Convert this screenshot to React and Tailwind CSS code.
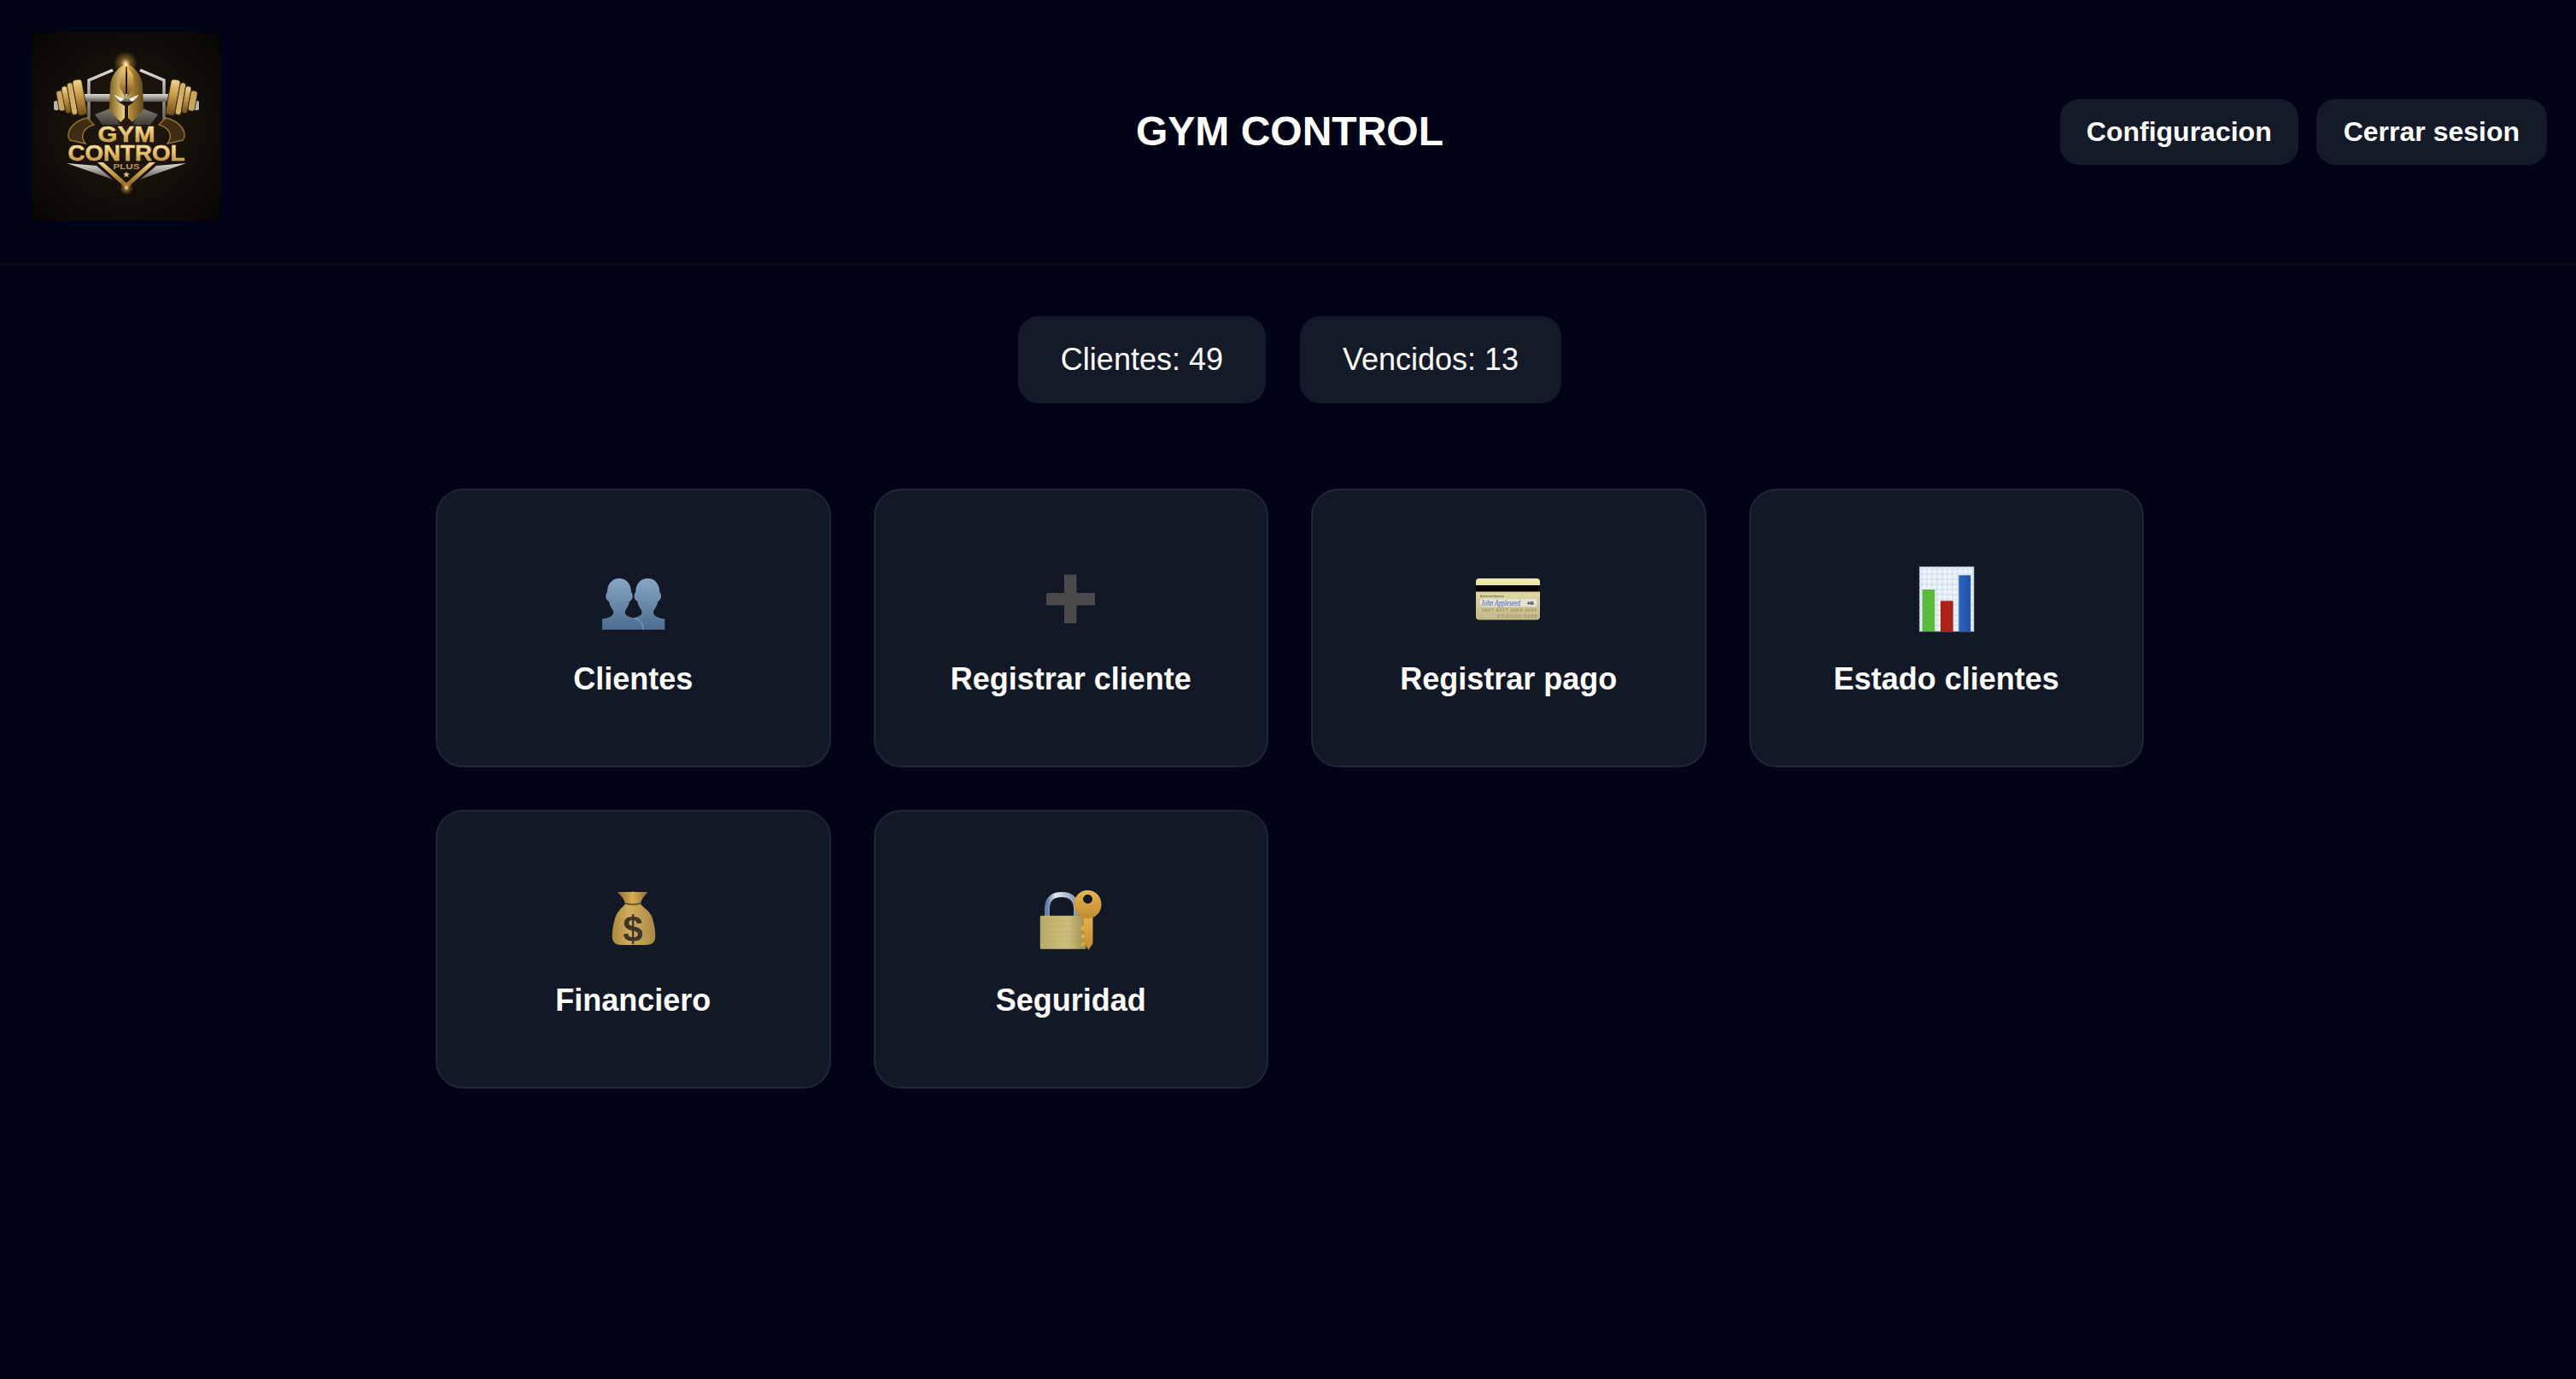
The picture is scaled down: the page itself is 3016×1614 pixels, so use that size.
import React from "react";

function Logo() {
  return (
    <svg width="220" height="220" viewBox="0 0 220 220" className="block">
      <defs>
        <radialGradient id="lbg" cx="50%" cy="50%" r="72%">
          <stop offset="0%" stopColor="#261c10" />
          <stop offset="50%" stopColor="#140f09" />
          <stop offset="100%" stopColor="#060504" />
        </radialGradient>
        <linearGradient id="lg" x1="0" y1="0" x2="0" y2="1">
          <stop offset="0%" stopColor="#f0d48c" />
          <stop offset="50%" stopColor="#bf9040" />
          <stop offset="100%" stopColor="#6f4e1a" />
        </linearGradient>
        <linearGradient id="lh" x1="0" y1="0" x2="1" y2="0">
          <stop offset="0%" stopColor="#7d5f24" />
          <stop offset="42%" stopColor="#e8ca7c" />
          <stop offset="50%" stopColor="#fbeab0" />
          <stop offset="58%" stopColor="#b98e3f" />
          <stop offset="100%" stopColor="#5f4718" />
        </linearGradient>
        <linearGradient id="ls" x1="0" y1="0" x2="0" y2="1">
          <stop offset="0%" stopColor="#dedbd3" />
          <stop offset="100%" stopColor="#5d5a55" />
        </linearGradient>
        <linearGradient id="lt" x1="0" y1="0" x2="0" y2="1">
          <stop offset="0%" stopColor="#fff0bd" />
          <stop offset="55%" stopColor="#e4bb6a" />
          <stop offset="100%" stopColor="#a97a2e" />
        </linearGradient>
        <radialGradient id="lglow">
          <stop offset="0%" stopColor="#fff2c0" stopOpacity="1" />
          <stop offset="40%" stopColor="#e2ab46" stopOpacity=".45" />
          <stop offset="100%" stopColor="#e2ab46" stopOpacity="0" />
        </radialGradient>
      </defs>
      <rect width="220" height="220" fill="url(#lbg)" />
      {/* shield */}
      <path d="M70 58L92 49V108H70ZM150 58L128 49V108H150Z" fill="#1a140c" />
      <path d="M66 108V56L94 44M154 108V56L126 44" stroke="url(#ls)" strokeWidth="3.5" fill="none" />
      {/* bar */}
      <rect x="55" y="72" width="110" height="9" rx="3" fill="url(#ls)" />
      <rect x="25" y="80" width="6" height="11" rx="2" fill="#b5b3ae" />
      <rect x="189" y="80" width="6" height="11" rx="2" fill="#b5b3ae" />
      <g transform="rotate(-10 44 77)" stroke="#2d200b" strokeWidth=".8">
        <rect x="29" y="66" width="8" height="24" rx="3" fill="#c9a55b" />
        <rect x="36" y="62" width="7" height="32" rx="3" fill="url(#lg)" />
        <rect x="43" y="59" width="7" height="38" rx="3" fill="#d4b064" />
        <rect x="50" y="57" width="11" height="42" rx="4" fill="url(#lg)" />
      </g>
      <g transform="rotate(10 176 77)" stroke="#2d200b" strokeWidth=".8">
        <rect x="159" y="57" width="11" height="42" rx="4" fill="url(#lg)" />
        <rect x="170" y="59" width="7" height="38" rx="3" fill="#d4b064" />
        <rect x="177" y="62" width="7" height="32" rx="3" fill="url(#lg)" />
        <rect x="184" y="66" width="8" height="24" rx="3" fill="#c9a55b" />
      </g>
      {/* gold swooshes */}
      <path d="M64 100C46 104 38 118 44 126L62 130C56 122 58 112 72 108Z" fill="#3e2d12" stroke="#94702e" strokeWidth="1.5" />
      <path d="M156 100C174 104 182 118 176 126L158 130C164 122 162 112 148 108Z" fill="#3e2d12" stroke="#94702e" strokeWidth="1.5" />
      {/* shoulders */}
      <path d="M73 96L96 87L102 108H82ZM147 96L124 87L118 108H138Z" fill="url(#ls)" opacity=".55" />
      {/* helmet */}
      <path d="M110 36C100 41 92 50 91 62L90 90L103 105L108 100V86L99 80L96 73L107 78L109 40H111L113 78L124 73L121 80L112 86V100L117 105L130 90L129 62C128 50 120 41 110 36Z" fill="url(#lh)" />
      <path d="M96 73L107 78L103 81ZM124 73L113 78L117 81Z" fill="#fff7dd" />
      <path d="M102 50L109 40V76L102 64ZM118 50L111 40V76L118 64Z" fill="url(#lg)" />
      <circle cx="109" cy="36" r="14" fill="url(#lglow)" />
      {/* blades & point */}
      <path d="M40 153L94 172L75 156ZM180 153L126 172L145 156Z" fill="url(#ls)" />
      <path d="M76 152L110 183L144 152L137 152L110 176L83 152Z" fill="url(#lg)" />
      <circle cx="110" cy="182" r="8" fill="url(#lglow)" />
      {/* wordmark */}
      <text x="110" y="128" textAnchor="middle" fontSize="25" fontWeight="700" fill="url(#lt)" stroke="#e4bb6a" strokeWidth=".5" textLength="67" lengthAdjust="spacingAndGlyphs">GYM</text>
      <text x="110" y="150" textAnchor="middle" fontSize="25" fontWeight="700" fill="url(#lt)" stroke="#e4bb6a" strokeWidth=".5" textLength="137" lengthAdjust="spacingAndGlyphs">CONTROL</text>
      <text x="110" y="160" textAnchor="middle" fontSize="9.5" fontWeight="700" fill="#b99554" textLength="31" lengthAdjust="spacingAndGlyphs">PLUS</text>
      <path d="M110 162.5l1 2.6 2.8.1-2.2 1.7.8 2.7-2.4-1.6-2.4 1.6.8-2.7-2.2-1.7 2.8-.1z" fill="#e9c273" />
    </svg>
  );
}

function IconPeople() {
  const bust = "M4 77V64.5C10 63.5 16 62 17 58C17.5 56 17 55 16.5 54C14 51 12.5 47 12 44C9.5 43 8 40 8.3 37C8.5 35 9.5 33.5 10 33C10 24 15 17 24 17C33 17 38 24 38 33C38.5 33.5 39.5 35 39.7 37C40 40 38.5 43 36 44C35.5 47 34 51 31.5 54C31 55 30.5 56 31 58C32 61 37 62.5 42 63.5C48 65 52 69 52 77Z";
  return (
    <svg width="80" height="80" viewBox="0 0 80 80" className="block">
      <defs>
        <linearGradient id="pg" gradientUnits="userSpaceOnUse" x1="0" y1="17" x2="0" y2="77">
          <stop offset="0%" stopColor="#88a6c6" />
          <stop offset="100%" stopColor="#4d6c8f" />
        </linearGradient>
      </defs>
      <g transform="translate(81.3,0) scale(-1,1)"><path d={bust} fill="url(#pg)" /></g>
      <path d={bust} fill="url(#pg)" />
      <path d="M42 63.5C48 65 52 69 52 77" fill="none" stroke="#9db8d3" strokeWidth=".8" />
    </svg>
  );
}

function IconPlus() {
  return (
    <svg width="80" height="80" viewBox="0 0 80 80" className="block">
      <path d="M32.5 13H46V34.5H67.5V48H46V69H32.5V48H11.5V34.5H32.5Z" fill="#4a4a4b" stroke="#555556" strokeWidth=".7" />
    </svg>
  );
}

function IconCard() {
  return (
    <svg width="80" height="80" viewBox="-1 0 80 80" className="block">
      <defs>
        <linearGradient id="cg" x1="0" y1="0" x2="0" y2="1">
          <stop offset="0%" stopColor="#f0e9b0" />
          <stop offset="100%" stopColor="#c2b786" />
        </linearGradient>
      </defs>
      <rect x="1" y="17" width="75" height="48.5" rx="4" fill="url(#cg)" />
      <rect x="1" y="25" width="75" height="7.5" fill="#050505" />
      <text x="6" y="38.6" fontSize="3" fill="#444">Authorized Signature</text>
      <rect x="6" y="41" width="66" height="9" fill="#e4e3da" />
      <text x="7" y="49" fontSize="10" fontStyle="italic" fontFamily="'Liberation Serif', serif" fill="#3f63ad" textLength="46" lengthAdjust="spacingAndGlyphs">John Appleseed</text>
      <text x="61" y="47.6" fontSize="4.6" fontWeight="700" fill="#222">448</text>
      <text x="8" y="55.6" fontSize="5" fontWeight="700" fill="#98926a" textLength="64" lengthAdjust="spacing">6897 6877 9000 3045</text>
      <text x="26" y="63" fontSize="5" fontWeight="700" fill="#98926a" textLength="46" lengthAdjust="spacing">07/22/14 3000</text>
    </svg>
  );
}

function IconChart() {
  const lines = [];
  for (let i = 0; i < 13; i++) lines.push(<path key={"h" + i} d={`M8.5 ${6 + i * 6}H72`} stroke="#d3e2f0" strokeWidth="1.5" />);
  for (let i = 0; i < 11; i++) lines.push(<path key={"v" + i} d={`M${11 + i * 6} 3.5V79`} stroke="#d3e2f0" strokeWidth="1.5" />);
  return (
    <svg width="80" height="80" viewBox="0 0 80 80" className="block">
      <defs>
        <linearGradient id="cbg" x1="0" y1="0" x2="1" y2="0">
          <stop offset="0%" stopColor="#2f64c4" />
          <stop offset="100%" stopColor="#1f4fa8" />
        </linearGradient>
      </defs>
      <rect x="8.3" y="3.3" width="63.7" height="75.7" fill="#f0f3f7" stroke="#8f97a5" strokeWidth=".8" />
      {lines}
      <rect x="11.7" y="30" width="14.6" height="49" fill="#5aba3c" />
      <rect x="33" y="43.3" width="14.7" height="35.7" fill="#ab2415" />
      <rect x="54.3" y="13.3" width="14" height="65.7" fill="url(#cbg)" />
    </svg>
  );
}

function IconBag() {
  return (
    <svg width="80" height="80" viewBox="0 0 80 80" className="block">
      <defs>
        <linearGradient id="bg1" x1="0" y1="0" x2="1" y2="0">
          <stop offset="0%" stopColor="#a8873f" />
          <stop offset="40%" stopColor="#d3ad5e" />
          <stop offset="100%" stopColor="#a98844" />
        </linearGradient>
        <linearGradient id="bg2" x1="0" y1="0" x2="1" y2="0">
          <stop offset="0%" stopColor="#8a6c30" />
          <stop offset="50%" stopColor="#d8ad54" />
          <stop offset="100%" stopColor="#8f7135" />
        </linearGradient>
      </defs>
      <path d="M31 22C27 27 20.5 31 18.5 41C16.5 48 15.7 55 15.7 60C15.7 67 20 70 27 70H55C62 70 66.3 67 66.3 60C66.3 55 65.5 48 63.5 41C61.5 31 53 27 49 22Z" fill="url(#bg1)" />
      <path d="M21.7 8.5C27 7 34 9 40 7.5C46 9 52 7 57 8.5C54 12 50 16 49 22C44 24 36 24 31 22C30 16 26 12 21.7 8.5Z" fill="url(#bg2)" />
      <path d="M31 22C36 24 44 24 49 22L49.5 20C44 22 36 22 30.5 20Z" fill="#6f5524" />
      <text x="40" y="66" textAnchor="middle" fontSize="42" fontWeight="700" fill="#3d3527">$</text>
    </svg>
  );
}

function IconLock() {
  return (
    <svg width="80" height="80" viewBox="0 0 80 80" className="block">
      <defs>
        <linearGradient id="lk1" x1="0" y1="0" x2="1" y2="0">
          <stop offset="0%" stopColor="#b7ab68" />
          <stop offset="60%" stopColor="#cbbf80" />
          <stop offset="100%" stopColor="#9c8d4e" />
        </linearGradient>
        <linearGradient id="lk2" x1="0" y1="0" x2="1" y2="0">
          <stop offset="0%" stopColor="#5f7ea8" />
          <stop offset="30%" stopColor="#e5ebf2" />
          <stop offset="100%" stopColor="#8796ac" />
        </linearGradient>
        <linearGradient id="lk3" x1="0" y1="0" x2="0" y2="1">
          <stop offset="0%" stopColor="#e8b44e" />
          <stop offset="100%" stopColor="#c08c30" />
        </linearGradient>
      </defs>
      <path d="M12 37V27C12 15 20 11 29 11C38 11 45 15 46 26V37" fill="none" stroke="url(#lk2)" strokeWidth="6" />
      <rect x="3.8" y="35.7" width="54" height="39" rx="1.5" fill="url(#lk1)" />
      <path d="M4 42H57M4 48H57M4 54H57M4 60H57M4 66H57" stroke="#a5985a" strokeWidth=".7" opacity=".35" />
      <path d="M55 34V66L60.5 76L65.5 68V34Z" fill="url(#lk3)" />
      <circle cx="54" cy="50" r="2.6" fill="#e0ab45" />
      <circle cx="54" cy="60" r="2.2" fill="#e0ab45" />
      <circle cx="54" cy="69" r="2.2" fill="#e0ab45" />
      <path d="M59.5 6C68.5 6 75.5 13 75.5 22.5C75.5 32 68.5 39 59.5 39C50.5 39 43.5 32 43.5 22.5C43.5 13 50.5 6 59.5 6Z M59.5 11C56.5 11 54 13.5 54 16.3C54 19.2 56.5 21.6 59.5 21.6C62.5 21.6 65 19.2 65 16.3C65 13.5 62.5 11 59.5 11Z" fill="url(#lk3)" fillRule="evenodd" />
    </svg>
  );
}

const items = [
  ["Clientes", IconPeople],
  ["Registrar cliente", IconPlus],
  ["Registrar pago", IconCard],
  ["Estado clientes", IconChart],
  ["Financiero", IconBag],
  ["Seguridad", IconLock],
];

export default function App() {
  return (
    <div className="min-h-screen bg-[#010416] font-['Liberation_Sans',Arial,sans-serif] text-white">
      <header className="grid h-[310px] grid-cols-[1fr_auto_1fr] items-center border-b-2 border-[#0c0e14] pl-[38px] pr-[34px]">
        <div className="mb-[12px]">
          <Logo />
        </div>
        <h1 className="text-[48px] font-bold leading-[56px]">GYM CONTROL</h1>
        <div className="flex justify-end gap-[21px]">
          <button className="h-[77px] rounded-[22px] bg-[#141a28] px-[31px] text-[32px] font-bold text-white">Configuracion</button>
          <button className="h-[77px] rounded-[22px] bg-[#141a28] px-[32px] text-[32px] font-bold text-white">Cerrar sesion</button>
        </div>
      </header>
      <main className="pl-[4px]">
        <div className="flex justify-center gap-[40px] pt-[60px]">
          <div className="flex h-[102px] items-center rounded-[24px] bg-[#141a28] px-[50px] text-[36px]">Clientes: 49</div>
          <div className="flex h-[102px] items-center rounded-[24px] bg-[#141a28] px-[50px] text-[36px]">Vencidos: 13</div>
        </div>
        <div className="mx-auto mt-[100px] grid w-[2000px] grid-cols-4 gap-[50px]">
          {items.map(([label, Icon]) => (
            <div key={label} className="flex h-[326px] flex-col items-center rounded-[32px] border-2 border-[#202633] bg-[#121826] pt-[86px]">
              <Icon />
              <div className="mt-[33px] text-[36px] font-bold leading-[44px]">{label}</div>
            </div>
          ))}
        </div>
      </main>
    </div>
  );
}
